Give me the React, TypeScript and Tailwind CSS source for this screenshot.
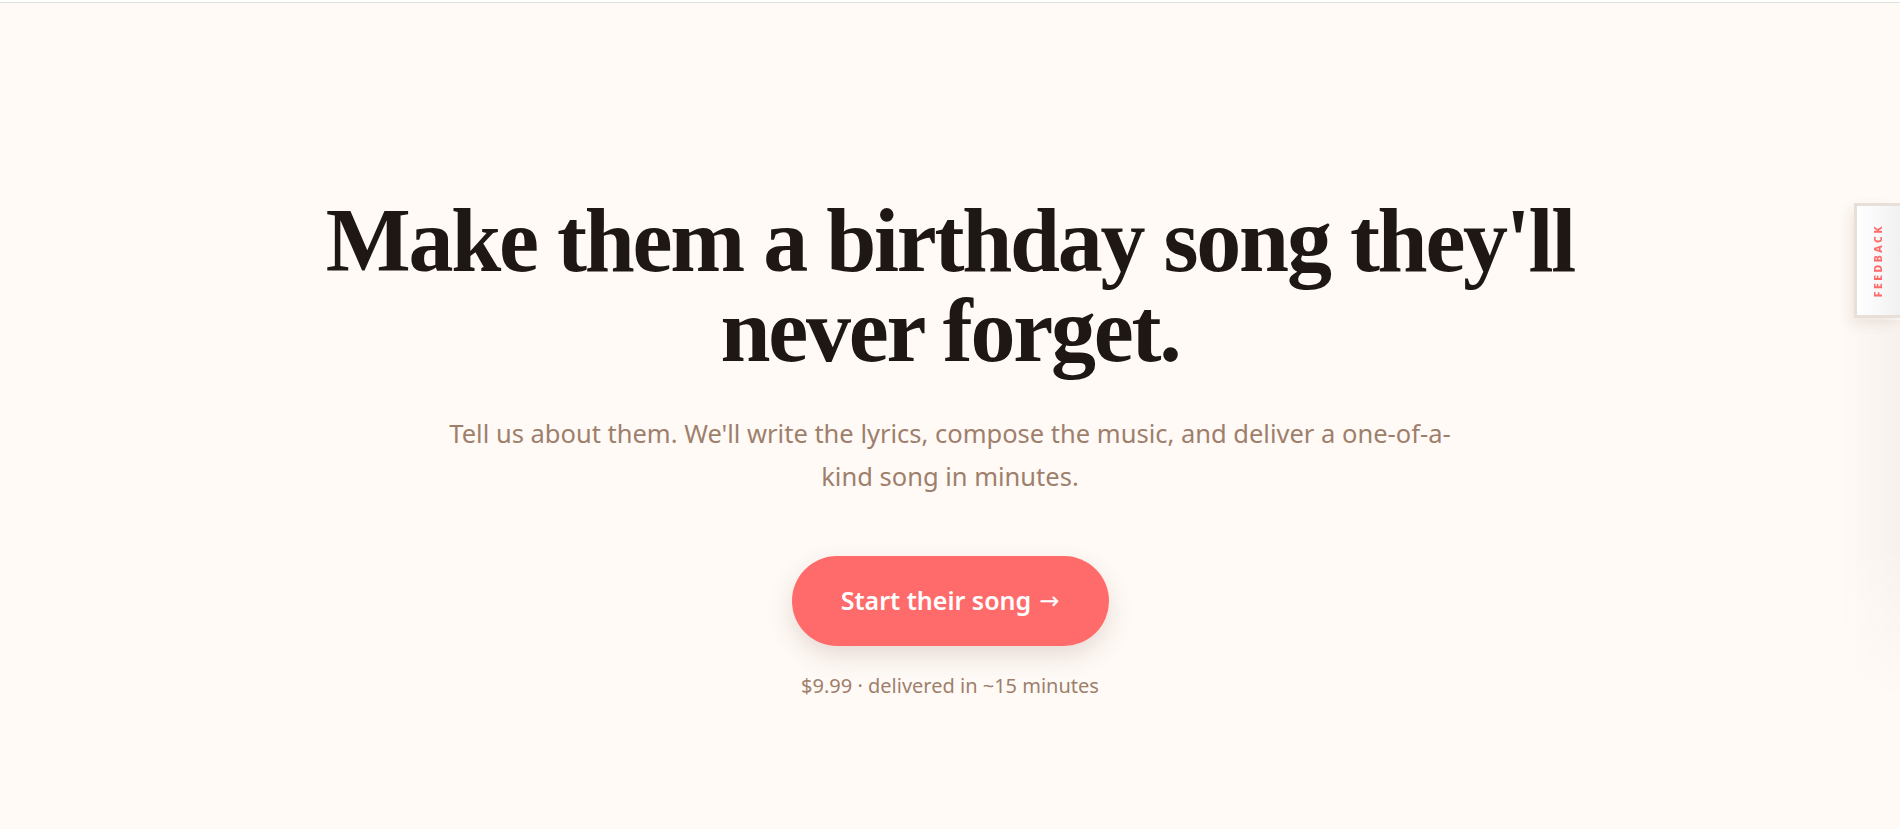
export default function App() {
  return (
    <div className="relative min-h-screen overflow-hidden bg-[#fffaf6]">
      {/* thin top rule */}
      <div className="h-[3px] border-b border-[#dde3df] bg-white" />

      {/* Hero */}
      <main className="flex flex-col items-center pt-[193px] text-center">
        <h1 className="font-['Liberation_Serif',serif] text-[90px] font-bold leading-none tracking-[-0.025em] text-[#1e1714]">
          Make them a birthday song they'll
          <br />
          never forget.
        </h1>

        <p className="mt-9 w-[1030px] font-['Noto_Sans',sans-serif] text-[25.5px] leading-[43px] text-[#9e7f6c]">
          Tell us about them. We'll write the lyrics, compose the music, and deliver a one-of-a-kind song in minutes.
        </p>

        <button className="mt-[58px] flex h-[90px] w-[317px] items-center justify-center gap-2 rounded-full bg-[#ff6b6b] font-['Noto_Sans',sans-serif] text-[25px] font-semibold text-white shadow-[0_10px_24px_rgba(120,80,60,0.18)]">
          Start their song
          <span className="font-['DejaVu_Sans',sans-serif] text-[24px] font-normal">→</span>
        </button>

        <p className="mt-[26px] font-['Noto_Sans',sans-serif] text-[20px] leading-[28px] text-[#9e7f6c]">
          $9.99 · delivered in ~15 minutes
        </p>
      </main>

      {/* Feedback tab */}
      <div className="absolute right-0 top-[203px] flex h-[115px] w-[46px] items-center justify-center border-y-[3px] border-l-[3px] border-[#e8dfd8] bg-gradient-to-r from-white to-[#f1f1f1] shadow-[-4px_6px_12px_rgba(120,90,70,0.12)]">
        <span className="rotate-180 font-['Noto_Sans',sans-serif] text-[10.5px] font-extrabold tracking-[0.24em] text-[#ff6b6b] [writing-mode:vertical-rl]">
          FEEDBACK
        </span>
      </div>

      <div className="pointer-events-none absolute right-0 top-[320px] h-[380px] w-[60px] bg-gradient-to-r from-transparent to-[rgba(60,40,30,0.04)] [mask-image:linear-gradient(to_bottom,black,black_60%,transparent)]" />
    </div>
  );
}
